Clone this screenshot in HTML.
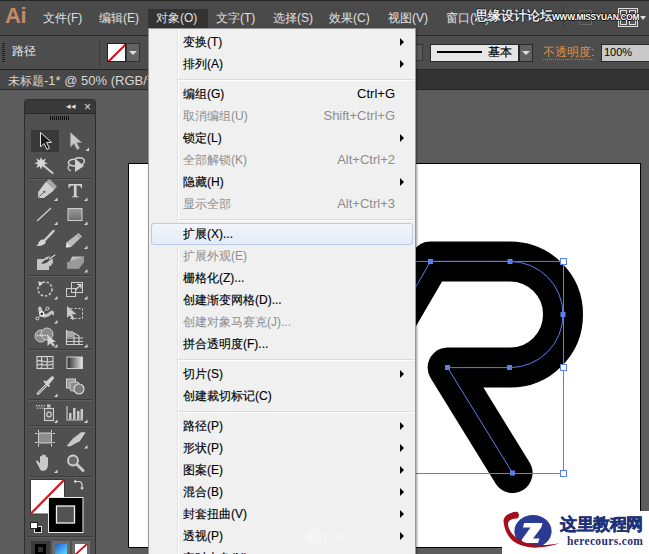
<!DOCTYPE html><html><head><meta charset="utf-8"><style>
*{margin:0;padding:0;box-sizing:border-box}
html,body{width:649px;height:554px;overflow:hidden;background:#5c5c5c;font-family:"Liberation Sans",sans-serif;}
.ab{position:absolute}
.t{position:absolute;white-space:nowrap;line-height:1}
</style></head><body>
<div class="ab" style="left:0;top:89px;width:649px;height:465px;background:#5c5c5c"></div>
<div class="ab" style="left:128px;top:163px;width:513px;height:385px;background:#fff;border:1px solid #000"></div>
<svg class="ab" style="left:0;top:0" width="649" height="554" viewBox="0 0 649 554">
<path d="M307.3 473 L430.6 261.4 L510 261.4 A53 53 0 0 1 563 314.5 A53 53 0 0 1 510 367.6 L447.6 367.6 L512.6 473" fill="none" stroke="#000" stroke-width="40" stroke-linecap="round" stroke-linejoin="round"/>
<path d="M307.3 473 L430.6 261.4 L510 261.4 A53 53 0 0 1 563 314.5 A53 53 0 0 1 510 367.6 L447.6 367.6 L512.6 473" fill="none" stroke="#5b7ef0" stroke-width="1"/>
<path d="M300 261.4 H563.5 V473.5 H300" fill="none" stroke="#5b7ef0" stroke-width="1"/>
<g fill="#5b7ef0">
<rect x="428" y="259" width="5" height="5"/><rect x="507.5" y="259" width="5" height="5"/>
<rect x="560.5" y="312" width="5" height="5"/>
<rect x="445" y="365" width="5" height="5"/><rect x="507" y="365" width="5" height="5"/>
<rect x="510" y="470.5" width="5" height="5"/>
</g>
<g fill="#fff" stroke="#5b7ef0" stroke-width="1">
<rect x="560.5" y="258.5" width="6" height="6"/><rect x="560.5" y="364.5" width="6" height="6"/><rect x="560.5" y="470.5" width="6" height="6"/>
</g>
</svg>
<div class="ab" style="left:0;top:0;width:649px;height:36px;background:#4a4a4a;border-top:1px solid #262626;border-bottom:1px solid #2a2a2a"></div>
<div class="t" style="left:5px;top:5px;font-size:22px;font-weight:bold;color:#c48a68;letter-spacing:-0.5px">Ai</div>
<div class="ab" style="left:148px;top:9px;width:60px;height:19px;background:#333"></div>
<div class="t" style="left:43px;top:12px;font-size:12px;color:#e0e0e0">文件(F)</div>
<div class="t" style="left:99px;top:12px;font-size:12px;color:#e0e0e0">编辑(E)</div>
<div class="t" style="left:156px;top:12px;font-size:12px;color:#e0e0e0">对象(O)</div>
<div class="t" style="left:216px;top:12px;font-size:12px;color:#e0e0e0">文字(T)</div>
<div class="t" style="left:273px;top:12px;font-size:12px;color:#e0e0e0">选择(S)</div>
<div class="t" style="left:329px;top:12px;font-size:12px;color:#e0e0e0">效果(C)</div>
<div class="t" style="left:388px;top:12px;font-size:12px;color:#e0e0e0">视图(V)</div>
<div class="t" style="left:446px;top:12px;font-size:12px;color:#e0e0e0">窗口(W)</div>
<div class="ab" style="left:563px;top:6px;width:1px;height:23px;background:#3a3a3a"></div>
<div class="ab" style="left:579px;top:10px;width:13px;height:15px;border:1px solid #676767"></div>
<div class="ab" style="left:618px;top:8px;width:20px;height:19px;border:1px solid #ddd;background:#555"></div>
<div class="ab" style="left:620px;top:10px;width:7px;height:7px;border:1px solid #ddd"></div><div class="ab" style="left:629px;top:10px;width:7px;height:7px;border:1px solid #ddd"></div><div class="ab" style="left:620px;top:19px;width:7px;height:6px;border:1px solid #ddd"></div><div class="ab" style="left:629px;top:19px;width:7px;height:6px;border:1px solid #ddd"></div>
<div class="ab" style="left:640px;top:16px;width:0;height:0;border-left:3px solid transparent;border-right:3px solid transparent;border-top:4px solid #ddd"></div>
<div class="t" style="left:475px;top:10px;font-size:12.5px;color:#fff;-webkit-text-stroke:0.3px #fff;text-shadow:1px 0 0 #222,-1px 0 0 #222,0 1px 0 #222,0 -1px 0 #222,1px 1px 0 #222,-1px -1px 0 #222">思缘设计论坛</div>
<div class="t" style="left:552px;top:13px;font-size:9px;font-weight:bold;letter-spacing:-0.3px;transform:scaleX(0.93);transform-origin:0 0;color:#fff;text-shadow:1px 0 0 #111,-1px 0 0 #111,0 1px 0 #111,0 -1px 0 #111">WWW.MISSYUAN.COM</div>
<div class="ab" style="left:0;top:36px;width:649px;height:34px;background:#4d4d4d;border-bottom:1px solid #262626"></div>
<div class="ab" style="left:2px;top:43px;width:3px;height:20px;background:repeating-linear-gradient(#222 0 1px,transparent 1px 2px)"></div>
<div class="t" style="left:12px;top:45px;font-size:12px;color:#e8e8e8">路径</div>
<div class="ab" style="left:99px;top:40px;width:1px;height:26px;background:#3a3a3a"></div>
<div class="ab" style="left:107px;top:43px;width:19px;height:19px;background:#fff;border:1px solid #222;overflow:hidden"><div class="ab" style="left:-3px;top:8px;width:24px;height:2px;background:#d01020;transform:rotate(-45deg)"></div></div>
<div class="ab" style="left:126px;top:43px;width:14px;height:19px;background:#636363;border:1px solid #333"></div>
<div class="ab" style="left:129px;top:51px;width:0;height:0;border-left:4px solid transparent;border-right:4px solid transparent;border-top:4px solid #ddd"></div>
<div class="ab" style="left:415px;top:44px;width:8px;height:17px;background:#5a5a5a;border:1px solid #333"></div>
<div class="ab" style="left:430px;top:44px;width:89px;height:18px;background:#e6e6e6;border:1px solid #2a2a2a"></div>
<div class="ab" style="left:437px;top:51px;width:45px;height:2px;background:#000"></div>
<div class="t" style="left:488px;top:46px;font-size:12px;color:#000;-webkit-text-stroke:0.2px #000">基本</div>
<div class="ab" style="left:519px;top:44px;width:14px;height:18px;background:#606060;border:1px solid #2a2a2a"></div>
<div class="ab" style="left:522px;top:51px;width:0;height:0;border-left:4px solid transparent;border-right:4px solid transparent;border-top:4px solid #ddd"></div>
<div class="t" style="left:543px;top:46px;font-size:12px;color:#e0913a;border-bottom:1px dotted #c07a30;padding-bottom:1px">不透明度:</div>
<div class="ab" style="left:601px;top:44px;width:60px;height:18px;background:#c9c9c9;border:1px solid #2a2a2a"></div>
<div class="t" style="left:604px;top:47px;font-size:11px;color:#000">100%</div>
<div class="ab" style="left:0;top:70px;width:649px;height:20px;background:#333;border-bottom:1px solid #282828"></div>
<div class="ab" style="left:0;top:70px;width:200px;height:19px;background:#474747"></div>
<div class="t" style="left:8px;top:74px;font-size:12px;color:#d8d8d8">未标题<span style="font-size:13px;letter-spacing:0px">-1* @ 50% (RGB/</span>预览)</div>
<div class="ab" style="left:24px;top:99px;width:72px;height:460px;background:#505050;border:1px solid #2e2e2e;border-radius:3px 3px 0 0"></div>
<div class="ab" style="left:25px;top:100px;width:70px;height:14px;background:#393939;border-radius:2px 2px 0 0;border-bottom:1px solid #2a2a2a"></div>
<div class="t" style="left:66px;top:102px;font-size:9px;color:#ddd">◂◂</div>
<div class="t" style="left:84px;top:101px;font-size:12px;color:#ddd">×</div>
<div class="ab" style="left:50px;top:116px;width:19px;height:4px;background:repeating-linear-gradient(90deg,#111 0 1px,transparent 1px 2px)"></div>
<svg class="ab" style="left:0;top:0" width="100" height="554" viewBox="0 0 100 554">
<g stroke="#3c3c3c" stroke-width="1"><path d="M28.5 178.5H92.5M28.5 275.5H92.5M28.5 349.5H92.5M28.5 399.5H92.5M28.5 425.5H92.5M28.5 476.5H92.5M28.5 536.5H92.5"/></g>
<g stroke="#5e5e5e" stroke-width="1"><path d="M28.5 179.5H92.5M28.5 276.5H92.5M28.5 350.5H92.5M28.5 400.5H92.5M28.5 426.5H92.5M28.5 477.5H92.5M28.5 537.5H92.5"/></g>
<!-- corner triangles -->
<g fill="#d8d8d8">
<path d="M89 147.5V151H85.5Z"/><path d="M57.5 197.5V201H54Z"/><path d="M87.5 197.5V201H84Z"/>
<path d="M57.5 221.5V225H54Z"/><path d="M87.5 221.5V225H84Z"/>
<path d="M87.5 245.5V249H84Z"/><path d="M87.5 269V272.5H84Z"/>
<path d="M57.5 296V299.5H54Z"/><path d="M87.5 296V299.5H84Z"/>
<path d="M57.5 320V323.5H54Z"/><path d="M57.5 344V347.5H54Z"/><path d="M87.5 344V347.5H84Z"/>
<path d="M57.5 393.5V397H54Z"/><path d="M57.5 419.5V423H54Z"/><path d="M87.5 419.5V423H84Z"/>
<path d="M87.5 445V448.5H84Z"/><path d="M57.5 469.5V473H54Z"/>
</g>
<!-- selection box -->
<rect x="31" y="130" width="28" height="22" fill="#393939"/>
<!-- arrow 1 -->
<path d="M40.5 132.5V147L44 143.5L47 149.5L49.5 148.3L46.6 142.4H51.5Z" fill="#1a1a1a" stroke="#e0e0e0" stroke-width="1"/>
<!-- arrow 2 -->
<path d="M70.5 132.5V147L74 143.5L77 149.5L79.5 148.3L76.6 142.4H81.5Z" fill="#c8c8c8" stroke="#9a9a9a" stroke-width="0.6"/>
<!-- magic wand -->
<path d="M41 157L42.3 160.3L45.8 158.6L44.3 162L47.7 163.3L44.3 164.4L45.6 168L42.3 166.3L41 169.5L39.7 166.3L36.3 168L37.8 164.4L34.5 163.3L37.8 162L36.3 158.6L39.7 160.3Z" fill="#d6d6d6"/>
<path d="M43.5 165.5L52.5 173" stroke="#c8c8c8" stroke-width="2.2" stroke-linecap="round"/>
<!-- lasso -->
<path d="M73 160C79 156 86 158 84 162.5C82.5 166 74 167 70 165C67 163 68.5 160 73 159" fill="none" stroke="#d0d0d0" stroke-width="1.5"/>
<path d="M69.5 165C67 167 68 170 71 171" fill="none" stroke="#d0d0d0" stroke-width="1.2"/>
<path d="M75 158.5V172L84 166Z" fill="#d0d0d0"/>
<!-- pen -->
<path d="M49 184L54.5 189.5L52.5 191.5L44 198H38L38.2 192L44.5 183.5L46.5 181.5Z" fill="#cfcfcf"/>
<path d="M38.5 197.5L43.5 192.5" stroke="#555" stroke-width="0.9"/><circle cx="44.3" cy="191.8" r="1.1" fill="#555"/>
<path d="M46.5 181.5L49.5 179L57 186.5L54.5 189.5Z" fill="#a8a8a8"/>
<!-- type T -->
<path d="M68.5 184H82V188.3H81.2C80.7 186 80 185.4 77.2 185.4H76.6V195.5C76.6 196.3 77.2 196.6 78.8 196.6V197.3H71.7V196.6C73.3 196.6 73.9 196.3 73.9 195.5V185.4H73.3C70.5 185.4 69.8 186 69.3 188.3H68.5Z" fill="#d0d0d0"/>
<!-- line -->
<path d="M37.5 220.5L50.5 208.5" stroke="#d0d0d0" stroke-width="1.3" stroke-linecap="round"/>
<!-- rect -->
<defs><linearGradient id="rg" x1="0" y1="0" x2="0" y2="1"><stop offset="0" stop-color="#9a9a9a"/><stop offset="1" stop-color="#6e6e6e"/></linearGradient>
<linearGradient id="gg" x1="0" y1="0" x2="1" y2="0"><stop offset="0" stop-color="#2a2a2a"/><stop offset="1" stop-color="#e8e8e8"/></linearGradient>
<linearGradient id="bg2" x1="0" y1="0" x2="1" y2="1"><stop offset="0" stop-color="#1e5fd6"/><stop offset="1" stop-color="#5fe0ff"/></linearGradient></defs>
<rect x="68" y="208.5" width="14" height="12" fill="url(#rg)" stroke="#cfcfcf" stroke-width="1"/>
<!-- brush -->
<path d="M53.5 231L45 240" stroke="#cfcfcf" stroke-width="2.5" stroke-linecap="round"/>
<path d="M44 239.5C40 239 38.5 242 38 244.5C37 245.5 35.5 246 35.5 246C39.5 246.5 44.5 245.5 46 242Z" fill="#d4d4d4"/>
<!-- pencil -->
<path d="M78.5 233L82 236.5L71 247L66 247.5L66.5 242.5Z" fill="#bcbcbc"/>
<path d="M66 247.5L66.5 242.5L71 247Z" fill="#e0e0e0"/>
<path d="M77 234.5L80.5 238" stroke="#888" stroke-width="1"/>
<!-- blob brush -->
<path d="M37 259H44C45 257 47.5 256.3 50 256.5C52 257 53.5 259.5 53 262C52.5 264.5 51 266 49 266.5V270H37Z" fill="#c4c4c4"/>
<path d="M41.3 263.5C44 260 47 258.8 50.3 259C48.5 262 45 264.5 41.3 263.5Z" fill="#454545"/>
<path d="M49.3 259L55 255" stroke="#3a3a3a" stroke-width="2.6" stroke-linecap="round"/>
<path d="M49.3 259L55 255" stroke="#dcdcdc" stroke-width="1.3" stroke-linecap="round"/>
<!-- eraser -->
<path d="M72 256.5H84L79 268.5H67Z" fill="#bdbdbd"/>
<path d="M67 262.5H79L84 256.5" stroke="#888" stroke-width="0.8" fill="none"/>
<path d="M67 262.5V268.5H79L84 262.5V256.5" fill="#999"/>
<!-- rotate -->
<circle cx="45" cy="289" r="7" fill="none" stroke="#cfcfcf" stroke-width="1.5" stroke-dasharray="2.5 1.8"/>
<path d="M38 281.5L43.5 282.5L39.5 286.5Z" fill="#d6d6d6"/>
<!-- scale -->
<rect x="66.5" y="288.5" width="9" height="8" fill="none" stroke="#cfcfcf" stroke-width="1"/>
<rect x="71.5" y="282.5" width="11" height="10" fill="none" stroke="#cfcfcf" stroke-width="1"/>
<path d="M75.5 290L80.5 285M77 284.5H81V288.5" stroke="#e0e0e0" stroke-width="1.1" fill="none"/>
<!-- warp/puppet -->
<path d="M38.2 308.5C38.5 305.5 41.5 306 42 309C42.5 312 43.5 314.5 46 314C48.5 313.5 50 310.5 52 310.5C54 310.5 54.5 313.5 53.8 316C53 314 52 313.5 50.5 315C48.5 317 46 318 43 317.3C40.5 316.5 38 312 38.2 308.5Z" fill="#c4c4c4"/>
<path d="M37.4 318.5L47.4 308.5" stroke="#f0f0f0" stroke-width="0.8" stroke-dasharray="1.2 1"/>
<circle cx="41.8" cy="313.9" r="2" fill="#333" stroke="#fff" stroke-width="1.1"/>
<circle cx="37.4" cy="318.5" r="1.4" fill="#333" stroke="#fff" stroke-width="0.9"/>
<circle cx="47.4" cy="308.5" r="1.4" fill="#333" stroke="#fff" stroke-width="0.9"/>
<!-- free transform -->
<path d="M67 306V318L70 315L72.5 320L74.5 319L72 314.3H76.5Z" fill="#c8c8c8"/>
<rect x="70.5" y="308.5" width="12" height="10" fill="none" stroke="#d8d8d8" stroke-width="1" stroke-dasharray="2 2"/>
<!-- shape builder -->
<circle cx="41" cy="336" r="6" fill="#8a8a8a" stroke="#cfcfcf" stroke-width="1"/>
<circle cx="47" cy="334" r="6" fill="#8a8a8a" stroke="#cfcfcf" stroke-width="1"/>
<path d="M37 335.5H49" stroke="#eee" stroke-width="1.3" stroke-dasharray="1.3 1.2"/>
<path d="M47.5 335V346L50.5 343.2L53 346.5L55 345.5L52.5 342H56Z" fill="#d4d4d4"/>
<!-- perspective grid -->
<path d="M66.5 330V344.5H83" fill="none" stroke="#cfcfcf" stroke-width="1.2"/>
<path d="M67 331L74 333V344M74 333L79 336V344M67 338H83M67 341.5H83" fill="none" stroke="#cfcfcf" stroke-width="1.2"/>
<rect x="67" y="331" width="6" height="6" fill="#a8a8a8"/>
<!-- mesh -->
<rect x="37" y="356.5" width="16" height="12" fill="#5a5a5a" stroke="#d6d6d6" stroke-width="1.1"/>
<path d="M37 361C42 359 45 364 53 361M37 365C41 363 47 367 53 364M42 357C40 361 44 364 41 368.5M47 357C49 361 45 364 48 368.5" fill="none" stroke="#d6d6d6" stroke-width="1.1"/>
<!-- gradient -->
<rect x="67" y="357" width="15.5" height="11.5" fill="url(#gg)" stroke="#cfcfcf" stroke-width="1"/>
<!-- eyedropper -->
<path d="M38 393.5L47.5 384" stroke="#d8d8d8" stroke-width="2.6" stroke-linecap="round" fill="none"/>
<path d="M38.3 393.2L46.8 384.7" stroke="#555" stroke-width="0.9"/>
<path d="M45.5 382L51.5 376.5C53 375.5 54.8 377.3 53.8 378.8L48.5 385Z" fill="#d0d0d0"/>
<path d="M44 381L49.5 386.5" stroke="#d0d0d0" stroke-width="1.8"/>
<!-- blend -->
<rect x="66.5" y="379" width="9" height="9" fill="#9a9a9a" stroke="#cfcfcf" stroke-width="1"/>
<rect x="70" y="382" width="9" height="9" rx="2" fill="#8a8a8a" stroke="#cfcfcf" stroke-width="1"/>
<circle cx="79" cy="389" r="5" fill="#7a7a7a" stroke="#dadada" stroke-width="1.2"/>
<!-- symbol sprayer -->
<g fill="#d0d0d0"><rect x="36" y="405" width="1.3" height="1.3"/><rect x="38.5" y="405" width="1.3" height="1.3"/><rect x="41" y="405" width="1.3" height="1.3"/><rect x="43.5" y="405" width="1.3" height="1.3"/><rect x="37" y="407.5" width="1.3" height="1.3"/><rect x="39.5" y="407.5" width="1.3" height="1.3"/><rect x="42" y="407.5" width="1.3" height="1.3"/></g>
<rect x="47" y="404.5" width="3.5" height="3" fill="#c8c8c8"/>
<rect x="44.5" y="408.5" width="9" height="12" fill="#5c5c5c" stroke="#d0d0d0" stroke-width="1.1"/>
<circle cx="49" cy="414.5" r="2.3" fill="none" stroke="#d0d0d0" stroke-width="1.2"/>
<!-- graph -->
<path d="M67 406V420H83" fill="none" stroke="#d0d0d0" stroke-width="1.1"/>
<rect x="69" y="413" width="2.5" height="6.5" fill="#c8c8c8"/><rect x="73" y="408" width="2.5" height="11.5" fill="#c8c8c8"/><rect x="77" y="411" width="2.5" height="8.5" fill="#c8c8c8"/><rect x="80.5" y="409" width="2.5" height="10.5" fill="#c8c8c8"/>
<!-- artboard tool -->
<rect x="38.5" y="433" width="13" height="10" fill="#8c8c8c" stroke="#d0d0d0" stroke-width="1"/>
<path d="M35 433.5H37.5M52.5 433.5H55M35 442.5H37.5M52.5 442.5H55M38.5 430V432M51.5 430V432M38.5 444V446.5M51.5 444V446.5" stroke="#d0d0d0" stroke-width="1"/>
<!-- slice -->
<path d="M85 432.5L79 441.5L70 446.5L66.5 446L73 438.5L81.5 432Z" fill="#c8c8c8"/>
<path d="M85 432.5L79 441.5" stroke="#eee" stroke-width="0.8"/>
<!-- hand -->
<path d="M38.5 466C36.5 463 35.5 461 36.5 460.5C37.5 460 39 462 40 463.5V457C40 455.8 42 455.8 42 457V462V455.5C42 454.3 44 454.3 44 455.5V462V456C44 454.8 46 454.8 46 456V462.5V458C46 456.8 48 456.8 48 458V464C48 468 46.5 471 42.5 471C40.5 471 39.5 468 38.5 466Z" fill="#c8c8c8"/>
<!-- zoom -->
<circle cx="73" cy="460.5" r="5" fill="#6a6a6a" stroke="#d0d0d0" stroke-width="1.8"/>
<path d="M76.8 464.3L83 470.5" stroke="#c8c8c8" stroke-width="3" stroke-linecap="round"/>
<!-- swap -->
<path d="M74.5 481.5H78.5C80.5 481.5 82 483 82 485V489" fill="none" stroke="#d8d8d8" stroke-width="1.2"/>
<path d="M73.5 481.5L76 479.5V483.5Z M82 490L80 487.5H84Z" fill="#d8d8d8"/>
<!-- fill -->
<rect x="30.5" y="479.5" width="34" height="34.5" fill="#fff" stroke="#3a3a3a" stroke-width="1"/>
<path d="M31 513.5L64 480" stroke="#d0161e" stroke-width="2.2"/>
<!-- stroke -->
<rect x="48.5" y="497.5" width="34.5" height="35" fill="#000" stroke="#e8e8e8" stroke-width="1"/>
<rect x="56.5" y="506" width="18" height="17" fill="#535353" stroke="#f0f0f0" stroke-width="1.3"/>
<!-- default -->
<rect x="34.5" y="526.5" width="7" height="6" fill="#000" stroke="#ddd" stroke-width="1"/>
<rect x="30.5" y="522.5" width="7" height="6" fill="#fff" stroke="#222" stroke-width="1"/>
<!-- bottom buttons -->
<rect x="31" y="541" width="19" height="14" fill="#3a3a3a"/><rect x="35" y="544" width="11" height="11" fill="#000"/><rect x="38" y="547" width="5" height="5" fill="#333"/>
<rect x="52" y="541" width="18" height="14" fill="#6a6a6a"/><rect x="55" y="544" width="12" height="11" fill="url(#bg2)"/>
<rect x="72" y="541" width="18" height="14" fill="#6a6a6a"/><rect x="75" y="544" width="12" height="11" fill="#fff"/><path d="M75.5 554.5L87 544" stroke="#d0161e" stroke-width="1.8"/>
</svg>

<div class="ab" style="left:502px;top:511px;width:147px;height:43px;background:#fff"></div>
<svg class="ab" style="left:495px;top:500px" width="154" height="54" viewBox="0 0 154 54">
<ellipse cx="38" cy="31.3" rx="18.6" ry="16.3" fill="#2b3a93"/>
<path d="M29 23H47.5L46.3 27.5L38 38.5H44.5L43 43H26L27.2 39L35.5 27.5H28Z" fill="#fff"/>
<path d="M20 12C13 13 8 17 8.6 22C9.5 32 15 40 22 43.5C30 48 46 49.5 64.7 43.2C48 46.5 34 45 27 41C19 37 13.5 31 13 24C13 21 16 19 20 18.5Z" fill="#a3101c"/>
<circle cx="20.5" cy="15.2" r="3.4" fill="#a3101c"/>
</svg>
<div class="t" style="left:560px;top:516px;font-size:17px;font-weight:bold;font-family:&quot;Liberation Serif&quot;,serif;color:#1f3278;letter-spacing:-0.5px;-webkit-text-stroke:0.5px #1f3278">这里教程网</div>
<div class="t" style="left:567px;top:536px;font-size:11.5px;font-weight:bold;letter-spacing:0.35px;font-family:&quot;Liberation Serif&quot;,serif;color:#1f3278">herecours.com</div>
<div class="ab" style="left:148px;top:28px;width:268px;height:540px;background:#f0f0f0;border:1px solid #979797;box-shadow:1px 1px 2px rgba(0,0,0,.4)"></div>
<div class="ab" style="left:177px;top:29px;width:1px;height:530px;background:#e2e3e3"></div>
<div class="ab" style="left:178px;top:29px;width:1px;height:530px;background:#fff"></div>
<div class="t" style="left:183px;top:36px;font-size:12px;color:#000;-webkit-text-stroke:0.15px #000">变换(T)</div>
<div class="ab" style="left:400px;top:38px;width:0;height:0;border-top:4px solid transparent;border-bottom:4px solid transparent;border-left:4px solid #000"></div>
<div class="t" style="left:183px;top:58px;font-size:12px;color:#000;-webkit-text-stroke:0.15px #000">排列(A)</div>
<div class="ab" style="left:400px;top:60px;width:0;height:0;border-top:4px solid transparent;border-bottom:4px solid transparent;border-left:4px solid #000"></div>
<div class="ab" style="left:178px;top:79px;width:236px;height:1px;background:#dcdcdc"></div>
<div class="ab" style="left:178px;top:80px;width:236px;height:1px;background:#fff"></div>
<div class="t" style="left:183px;top:88px;font-size:12px;color:#000;-webkit-text-stroke:0.15px #000">编组(G)</div>
<div class="t" style="right:254px;top:87px;font-size:13px;color:#000">Ctrl+G</div>
<div class="t" style="left:183px;top:110px;font-size:12px;color:#8d8d8d;">取消编组(U)</div>
<div class="t" style="right:254px;top:109px;font-size:13px;color:#8d8d8d">Shift+Ctrl+G</div>
<div class="t" style="left:183px;top:132px;font-size:12px;color:#000;-webkit-text-stroke:0.15px #000">锁定(L)</div>
<div class="ab" style="left:400px;top:134px;width:0;height:0;border-top:4px solid transparent;border-bottom:4px solid transparent;border-left:4px solid #000"></div>
<div class="t" style="left:183px;top:154px;font-size:12px;color:#8d8d8d;">全部解锁(K)</div>
<div class="t" style="right:254px;top:153px;font-size:13px;color:#8d8d8d">Alt+Ctrl+2</div>
<div class="t" style="left:183px;top:176px;font-size:12px;color:#000;-webkit-text-stroke:0.15px #000">隐藏(H)</div>
<div class="ab" style="left:400px;top:178px;width:0;height:0;border-top:4px solid transparent;border-bottom:4px solid transparent;border-left:4px solid #000"></div>
<div class="t" style="left:183px;top:198px;font-size:12px;color:#8d8d8d;">显示全部</div>
<div class="t" style="right:254px;top:197px;font-size:13px;color:#8d8d8d">Alt+Ctrl+3</div>
<div class="ab" style="left:178px;top:219px;width:236px;height:1px;background:#dcdcdc"></div>
<div class="ab" style="left:178px;top:220px;width:236px;height:1px;background:#fff"></div>
<div class="ab" style="left:151px;top:223px;width:262px;height:22px;border:1px solid #b4cbea;border-radius:3px;background:linear-gradient(#f2f6fb,#e4ecf7)"></div>
<div class="t" style="left:183px;top:228px;font-size:12px;color:#000;-webkit-text-stroke:0.15px #000">扩展(X)...</div>
<div class="t" style="left:183px;top:250px;font-size:12px;color:#8d8d8d;">扩展外观(E)</div>
<div class="t" style="left:183px;top:272px;font-size:12px;color:#000;-webkit-text-stroke:0.15px #000">栅格化(Z)...</div>
<div class="t" style="left:183px;top:294px;font-size:12px;color:#000;-webkit-text-stroke:0.15px #000">创建渐变网格(D)...</div>
<div class="t" style="left:183px;top:316px;font-size:12px;color:#8d8d8d;">创建对象马赛克(J)...</div>
<div class="t" style="left:183px;top:338px;font-size:12px;color:#000;-webkit-text-stroke:0.15px #000">拼合透明度(F)...</div>
<div class="ab" style="left:178px;top:359px;width:236px;height:1px;background:#dcdcdc"></div>
<div class="ab" style="left:178px;top:360px;width:236px;height:1px;background:#fff"></div>
<div class="t" style="left:183px;top:368px;font-size:12px;color:#000;-webkit-text-stroke:0.15px #000">切片(S)</div>
<div class="ab" style="left:400px;top:370px;width:0;height:0;border-top:4px solid transparent;border-bottom:4px solid transparent;border-left:4px solid #000"></div>
<div class="t" style="left:183px;top:390px;font-size:12px;color:#000;-webkit-text-stroke:0.15px #000">创建裁切标记(C)</div>
<div class="ab" style="left:178px;top:411px;width:236px;height:1px;background:#dcdcdc"></div>
<div class="ab" style="left:178px;top:412px;width:236px;height:1px;background:#fff"></div>
<div class="t" style="left:183px;top:420px;font-size:12px;color:#000;-webkit-text-stroke:0.15px #000">路径(P)</div>
<div class="ab" style="left:400px;top:422px;width:0;height:0;border-top:4px solid transparent;border-bottom:4px solid transparent;border-left:4px solid #000"></div>
<div class="t" style="left:183px;top:442px;font-size:12px;color:#000;-webkit-text-stroke:0.15px #000">形状(P)</div>
<div class="ab" style="left:400px;top:444px;width:0;height:0;border-top:4px solid transparent;border-bottom:4px solid transparent;border-left:4px solid #000"></div>
<div class="t" style="left:183px;top:464px;font-size:12px;color:#000;-webkit-text-stroke:0.15px #000">图案(E)</div>
<div class="ab" style="left:400px;top:466px;width:0;height:0;border-top:4px solid transparent;border-bottom:4px solid transparent;border-left:4px solid #000"></div>
<div class="t" style="left:183px;top:486px;font-size:12px;color:#000;-webkit-text-stroke:0.15px #000">混合(B)</div>
<div class="ab" style="left:400px;top:488px;width:0;height:0;border-top:4px solid transparent;border-bottom:4px solid transparent;border-left:4px solid #000"></div>
<div class="t" style="left:183px;top:508px;font-size:12px;color:#000;-webkit-text-stroke:0.15px #000">封套扭曲(V)</div>
<div class="ab" style="left:400px;top:510px;width:0;height:0;border-top:4px solid transparent;border-bottom:4px solid transparent;border-left:4px solid #000"></div>
<div class="t" style="left:183px;top:530px;font-size:12px;color:#000;-webkit-text-stroke:0.15px #000">透视(P)</div>
<div class="ab" style="left:400px;top:532px;width:0;height:0;border-top:4px solid transparent;border-bottom:4px solid transparent;border-left:4px solid #000"></div>
<div class="t" style="left:183px;top:552px;font-size:12px;color:#000;-webkit-text-stroke:0.15px #000">实时上色(N)</div>
<div class="ab" style="left:400px;top:554px;width:0;height:0;border-top:4px solid transparent;border-bottom:4px solid transparent;border-left:4px solid #000"></div>
<div class="ab" style="left:305px;top:529px;width:17px;height:16px;border-radius:6px;background:rgba(255,255,255,.3)"></div>
<div class="ab" style="left:324px;top:532px;width:3px;height:11px;background:rgba(255,255,255,.25)"></div><div class="ab" style="left:336px;top:533px;width:8px;height:10px;background:rgba(255,255,255,.2)"></div>
</body></html>
